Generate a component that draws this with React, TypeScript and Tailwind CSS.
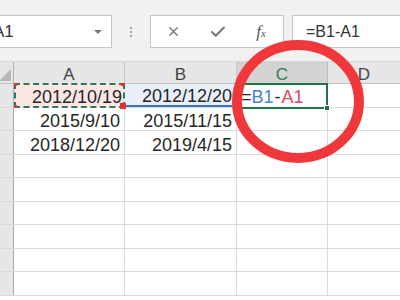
import { X, Check } from "lucide-react";

const rows = [
  ["2012/10/19", "2012/12/20"],
  ["2015/9/10", "2015/11/15"],
  ["2018/12/20", "2019/4/15"],
  ["", ""],
  ["", ""],
  ["", ""],
  ["", ""],
  ["", ""],
  ["", ""],
];

const font = { fontFamily: '"Liberation Sans", Arial, sans-serif' };

const App = () => {
  return (
    <div
      className="relative w-[400px] h-[300px] overflow-hidden bg-white text-[#262626]"
      style={font}
    >
      {/* formula bar */}
      <div className="flex items-start h-[62px] pt-[15px] bg-[#f1f1f1] border-b border-[#d6d6d6]">
        <div className="relative -ml-[10px] w-[122px] h-[33px] bg-white border border-[#c6c6c6] flex items-center">
          <span className="pl-[2px] text-[17px] text-[#333]">A1</span>
          <span className="absolute right-[9px] top-[14px] w-0 h-0 border-l-[4px] border-r-[4px] border-t-[4px] border-l-transparent border-r-transparent border-t-[#777]" />
        </div>
        <div className="w-[38px] h-[33px] flex flex-col items-center justify-center gap-[2px]">
          <span className="w-[2px] h-[2px] bg-[#a0a0a0]" />
          <span className="w-[2px] h-[2px] bg-[#a0a0a0]" />
          <span className="w-[2px] h-[2px] bg-[#a0a0a0]" />
        </div>
        <div className="w-[134px] h-[33px] bg-white border border-[#c6c6c6] flex items-center pl-[1px]">
          <div className="w-[44px] flex justify-center">
            <X size={15} strokeWidth={2.2} color="#757575" />
          </div>
          <div className="w-[44px] flex justify-center">
            <Check size={18} strokeWidth={2.6} color="#757575" />
          </div>
          <div className="w-[44px] flex justify-center">
            <span
              className="italic text-[17px] text-[#555] leading-none"
              style={{ fontFamily: '"Liberation Serif", "Times New Roman", serif' }}
            >
              f<span className="text-[11px]">x</span>
            </span>
          </div>
        </div>
        <div className="ml-[8px] flex-1 -mr-[10px] h-[33px] bg-white border border-[#c6c6c6] flex items-center pl-[13px]">
          <span className="text-[16px] text-[#333]">=B1-A1</span>
        </div>
      </div>

      {/* column headers */}
      <div className="flex h-[22px] bg-[#e6e6e6] border-b border-[#c4c4c4] text-[17px] leading-none">
        <div className="relative w-[14px] border-r border-[#b5b5b5] overflow-hidden">
          <span
            className="absolute right-[2px] bottom-[2px] w-0 h-0"
            style={{ borderBottom: "12px solid #b8b8b8", borderLeft: "12px solid transparent" }}
          />
        </div>
        <div className="w-[111px] border-r border-[#c8c8c8] flex items-center justify-center pt-[3px] text-[#444]">A</div>
        <div className="w-[112px] border-r border-[#c8c8c8] flex items-center justify-center pt-[3px] text-[#444]">B</div>
        <div className="w-[91px] border-r border-[#bcbcbc] bg-[#d3d3d3] flex items-center justify-center pt-[3px] text-[#2f7a50]">C</div>
        <div className="flex-1 flex items-center justify-center pt-[3px] text-[#444]">D</div>
      </div>

      {/* rows */}
      {rows.map((r, i) => (
        <div key={i} className="flex h-[23.5px] border-b border-[#d9d9d9] text-[18px] leading-none">
          <div className="w-[14px] bg-[#e6e6e6] border-r border-[#ababab] overflow-hidden flex items-end pb-[1px]">
            <span className="-ml-[9px] text-[15px] text-[#5b8fd0]">{i + 1}</span>
          </div>
          {i === 0 ? (
            <>
              <div className="relative w-[111px] -mt-[1px] h-[25px] bg-[#fbe6e6] border-2 border-dashed border-[#2f7a50] flex items-end justify-end pr-[1px]">
                {r[0]}
                <span className="absolute -left-[2px] -top-[2px] w-[3px] h-[3px] bg-[#d33]" />
                <span className="absolute -right-[2px] -top-[2px] w-[4px] h-[3px] bg-[#d33]" />
                <span className="absolute -left-[2px] -bottom-[2px] w-[3px] h-[3px] bg-[#d33]" />
                <span className="absolute -right-[3px] -bottom-[3px] w-[6px] h-[6px] bg-[#d33]" />
              </div>
              <div className="w-[112px] bg-[#e8eefa] border-b-2 border-[#3d6fd0] border-r border-r-[#d9d9d9] flex items-end justify-end pr-[4px]">
                {r[1]}
              </div>
              <div className="relative w-[91px] -mt-[1px] h-[26px] border-2 border-[#217346] flex items-end pb-[1px] pl-[2px]">
                <span>=</span>
                <span className="text-[#4a7fd6]">B1</span>
                <span className="px-[1px]">-</span>
                <span className="text-[#e04a62]">A1</span>
                <span className="absolute -right-[4px] -bottom-[4px] w-[6px] h-[6px] bg-[#217346] border border-white" />
              </div>
            </>
          ) : (
            <>
              <div className="w-[111px] border-r border-[#d9d9d9] flex items-end justify-end pr-[4px]">{r[0]}</div>
              <div className="w-[112px] border-r border-[#d9d9d9] flex items-end justify-end pr-[4px]">{r[1]}</div>
              <div className="w-[91px] border-r border-[#d9d9d9]" />
            </>
          )}
          <div className="flex-1" />
        </div>
      ))}

      {/* red annotation circle */}
      <svg className="absolute left-0 top-0 pointer-events-none" width="400" height="300">
        <ellipse cx="298" cy="101.5" rx="61" ry="56.5" fill="none" stroke="#f0383a" strokeWidth="10" />
      </svg>
    </div>
  );
};

export default App;
